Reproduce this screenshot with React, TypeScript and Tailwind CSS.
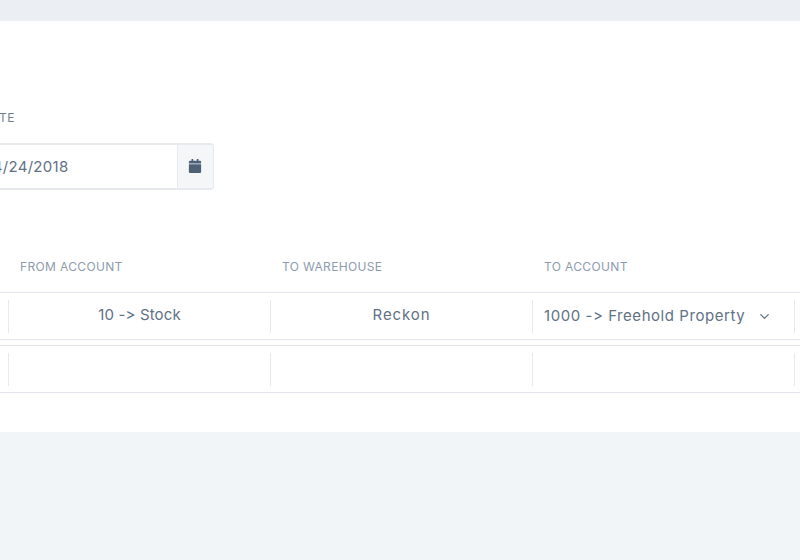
import React from "react";
import { FaCalendar } from "react-icons/fa";
import { ChevronDown } from "lucide-react";

const headers = ["From Account", "To Warehouse", "To Account"];

const App: React.FC = () => {
  return (
    <div className="h-[560px] w-[800px] overflow-hidden bg-[#f1f5f8] font-['Inter',sans-serif]">
      <div className="h-[21px] bg-[#ebeef3]" />
      <main className="h-[411px] overflow-hidden bg-white pt-[90px]">
        <div className="-ml-[30px] w-[244px]">
          <label className="block pl-[13px] text-[12px] leading-[14px] tracking-[0.3px] uppercase text-[#6f7f90]">
            Date
          </label>
          <div className="mt-[18px] flex h-[47px] rounded-[4px] border-y-2 border-r border-[#e6e9ee]">
            <div className="flex-1 pl-[13px] text-[15px] leading-[44px] tracking-[0.3px] text-[#5f7185]">
              04/24/2018
            </div>
            <div className="flex w-[36px] items-center justify-center rounded-r-[4px] border-l border-[#e6e9ee] bg-[#f4f6f8]">
              <FaCalendar className="-mt-[2px] -ml-[2px] text-[14px] text-[#4d6075]" />
            </div>
          </div>
        </div>

        <div className="mt-[70px] flex pl-[8px]">
          {headers.map((h) => (
            <div
              key={h}
              className="w-[262px] shrink-0 pl-[12px] text-[12px] leading-[14px] tracking-[0.35px] uppercase text-[#8d9bad]"
            >
              {h}
            </div>
          ))}
        </div>

        <div className="mt-[18px] flex h-[48px] items-center border-y border-[#e3e6f0] pl-[8px] text-[15px] text-[#5f7185]">
          <div className="flex h-[33px] w-[262px] shrink-0 items-center justify-center border-l border-[#e6e9ee] pb-[2px] tracking-[0.15px]">
            10 -&gt; Stock
          </div>
          <div className="flex h-[33px] w-[262px] shrink-0 items-center justify-center border-l border-[#e6e9ee] pb-[2px] tracking-[0.9px]">
            Reckon
          </div>
          <div className="flex h-[33px] w-[262px] shrink-0 items-center border-l border-[#e6e9ee] pl-[11px] tracking-[0.55px]">
            <span>1000 -&gt; Freehold Property</span>
            <ChevronDown className="ml-auto mr-[22px] size-[15px] text-[#5f7185]" />
          </div>
          <div className="h-[33px] w-[6px] shrink-0 border-l border-[#e6e9ee]" />
        </div>

        <div className="mt-[5px] flex h-[48px] items-center border-y border-[#e3e6f0] pl-[8px]">
          <div className="h-[33px] w-[262px] shrink-0 border-l border-[#e6e9ee]" />
          <div className="h-[33px] w-[262px] shrink-0 border-l border-[#e6e9ee]" />
          <div className="h-[33px] w-[262px] shrink-0 border-l border-[#e6e9ee]" />
          <div className="h-[33px] w-[6px] shrink-0 border-l border-[#e6e9ee]" />
        </div>
      </main>
    </div>
  );
};

export default App;
